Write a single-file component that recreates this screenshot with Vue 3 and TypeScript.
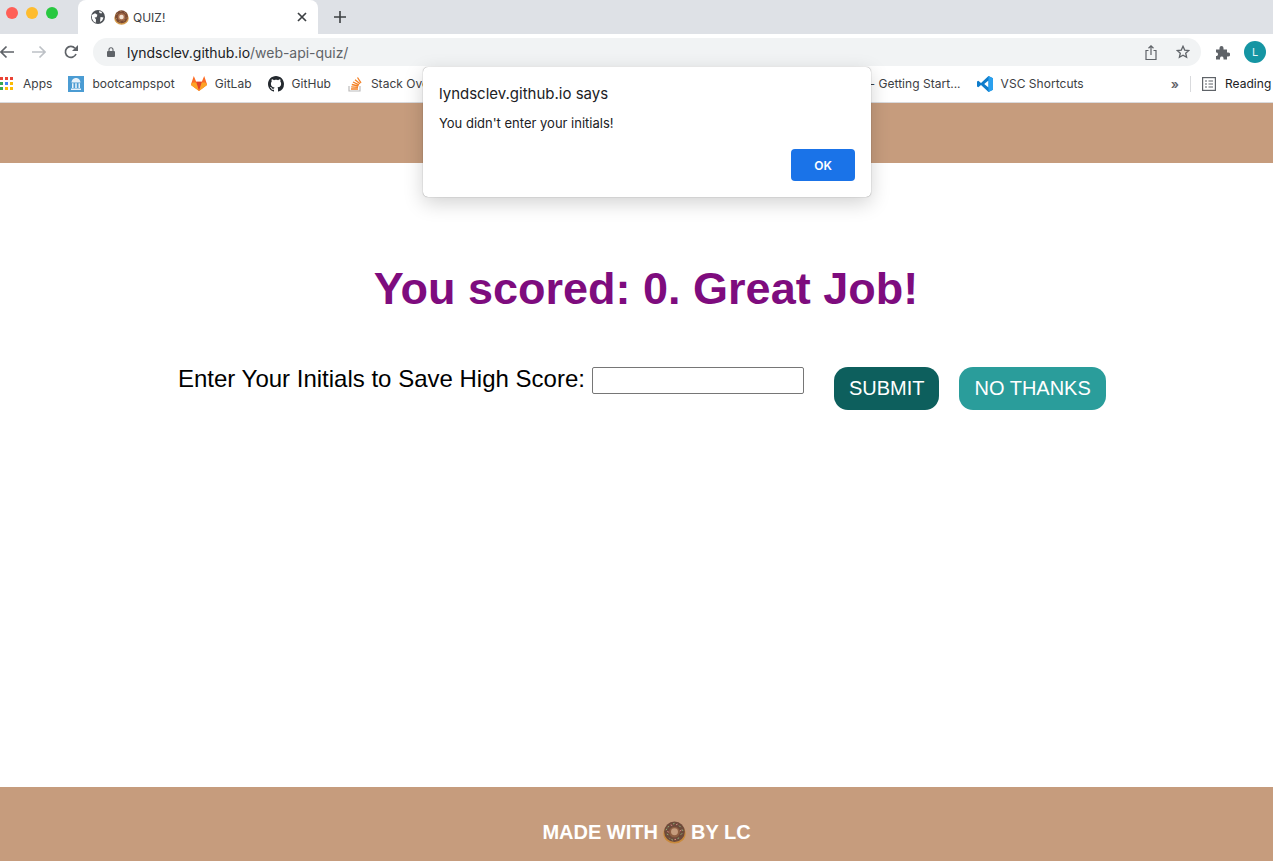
<template>
  <div class="window">
    <div class="tab-strip">
      <div class="lights">
        <span class="light red"></span>
        <span class="light amber"></span>
        <span class="light green"></span>
      </div>
      <div class="tab">
        <svg class="globe" width="14" height="14" viewBox="0 0 14 14">
          <circle cx="7" cy="7" r="7" fill="#4d5156" />
          <path d="M.8 5 4 3.200 6.400 4.800 5.600 7.200 3.600 7.400 5 9.400 4.800 12.800 2.600 11.500 1 8.500ZM8 1 11 2 10.500 3.500 8.500 3ZM9.500 7 12.500 7.500 11.200 10.500 9 12Z" fill="#fff" />
        </svg>
        <svg class="donut" width="15" height="15" viewBox="0 0 30 30">
          <ellipse cx="15" cy="16" rx="14.500" ry="13.500" fill="#d39a4c" />
          <circle cx="15" cy="13.500" r="13" fill="#7b4a33" />
          <circle cx="15" cy="14" r="7.500" fill="#a9714f" />
          <circle cx="15" cy="14" r="4.500" fill="#f3e3d3" />
          <path d="M5 9 7 7.500M21 5 23 7M4 17 6 18M24 17 26 15M13 3 15 2.500M11 23 13 24M19 22 21 21" stroke="#c9b27a" stroke-width="1.400" />
        </svg>
        <span class="tab-title">QUIZ!</span>
        <svg class="tab-close" width="10" height="10" viewBox="0 0 10 10">
          <path d="M1 1 9 9M9 1 1 9" stroke="#3c4043" stroke-width="1.700" />
        </svg>
      </div>
      <svg class="new-tab" width="12" height="12" viewBox="0 0 12 12">
        <path d="M6 0V12M0 6H12" stroke="#3c4043" stroke-width="1.600" />
      </svg>
    </div>

    <div class="toolbar">
      <svg class="nav-icon back" width="14" height="14" viewBox="2 0 14 14">
        <path d="M16 7H3M8.500 1.500 3 7l5.500 5.500" fill="none" stroke="#5f6368" stroke-width="1.700" />
      </svg>
      <svg class="nav-icon forward" width="14" height="14" viewBox="0 0 14 14">
        <path d="M0 7H13M7.500 1.500 13 7l-5.500 5.500" fill="none" stroke="#bdc1c6" stroke-width="1.700" />
      </svg>
      <svg class="nav-icon reload" width="14" height="14" viewBox="0 0 14 14">
        <path d="M12 9A5.500 5.500 0 1 1 11 3.200" fill="none" stroke="#5f6368" stroke-width="1.700" />
        <path d="M14 0V6H8Z" fill="#5f6368" />
      </svg>
      <div class="omnibox">
        <svg class="lock" width="8" height="10" viewBox="0 0 8 10">
          <path d="M2 4V2.800a2 2 0 0 1 4 0V4" fill="none" stroke="#5f6368" stroke-width="1.100" />
          <rect y="4" width="8" height="6" rx="1" fill="#5f6368" />
        </svg>
        <span class="url"><span class="url-host">lyndsclev.github.io</span>/web-api-quiz/</span>
        <svg class="share" width="12" height="15" viewBox="0 0 12 15">
          <path d="M3.500 5.500H1v9h10v-9H8.500" fill="none" stroke="#5f6368" stroke-width="1.200" />
          <path d="M6 10V1M3.500 3.200 6 .8l2.500 2.400" fill="none" stroke="#5f6368" stroke-width="1.200" />
        </svg>
        <svg class="star" width="14" height="14" viewBox="0 0 14 14">
          <path d="M7 1.300 8.700 5.100 12.800 5.500 9.700 8.200 10.600 12.300 7 10.200 3.400 12.300 4.300 8.200 1.200 5.500 5.300 5.100Z" fill="none" stroke="#5f6368" stroke-width="1.300" />
        </svg>
      </div>
      <svg class="puzzle" width="15" height="15" viewBox="0 0 15 15">
        <path d="M1 4.500H4.500V3a2 2 0 0 1 4 0V4.500H12V7.500h1.200a2 2 0 0 1 0 4H12V14.500H8.500V13a1.800 1.800 0 0 0-3.500 0v1.500H1V11h1a2 2 0 0 0 0-3.500H1Z" fill="#5f6368" />
      </svg>
      <span class="avatar">L</span>
    </div>

    <div class="bookmarks">
      <span class="apps-grid">
        <i v-for="(c, i) in appColors" :key="i" :style="{ background: c }"></i>
      </span>
      <span class="mark-label apps-label">Apps</span>
      <span class="mark">
        <svg width="16" height="16" viewBox="0 0 16 16">
          <rect width="16" height="16" fill="#4b9cd3" />
          <path d="M3.500 6.500C4 3 6 2 8 2s4 1 4.500 4.500ZM4 7.200H5.500V12H4ZM7.200 7.200H8.800V12H7.200ZM10.500 7.200H12V12H10.500ZM3 12.500H13V14H3Z" fill="#e8f2fa" />
        </svg>
        <span class="mark-label">bootcampspot</span>
      </span>
      <span class="mark">
        <svg width="16" height="15" viewBox="0 0 16 15">
          <path d="M8 15 .3 9.200 0 8.200 2.800 0 5.200 5.800H10.800L13.200 0 16 8.200 15.700 9.200Z" fill="#fc6d26" />
          <path d="M8 15 5.200 5.800H10.800Z" fill="#e24329" />
          <path d="M8 15 .3 9.200 0 8.200 2 6.500H5.200ZM8 15 15.700 9.200 16 8.200 14 6.500H10.800Z" fill="#fca326" />
        </svg>
        <span class="mark-label">GitLab</span>
      </span>
      <span class="mark">
        <svg width="16" height="16" viewBox="0 0 16 16">
          <path fill="#24292f" d="M8 0C3.580 0 0 3.580 0 8c0 3.540 2.290 6.530 5.470 7.590.4.070.55-.17.55-.38 0-.19-.01-.82-.01-1.490-2.010.37-2.530-.49-2.690-.94-.09-.23-.48-.94-.82-1.130-.28-.15-.68-.52-.01-.53.630-.01 1.080.58 1.230.82.720 1.210 1.870.87 2.330.66.070-.52.280-.87.510-1.070-1.780-.2-3.640-.89-3.640-3.950 0-.87.310-1.590.82-2.150-.08-.2-.36-1.020.08-2.120 0 0 .67-.21 2.200.82.640-.18 1.320-.27 2-.27s1.360.09 2 .27c1.530-1.040 2.200-.82 2.200-.82.440 1.100.16 1.920.08 2.120.51.560.82 1.270.82 2.150 0 3.070-1.870 3.750-3.650 3.950.29.250.54.730.54 1.480 0 1.070-.01 1.930-.01 2.200 0 .21.150.46.550.38A8.010 8.010 0 0 0 16 8c0-4.420-3.580-8-8-8Z" />
        </svg>
        <span class="mark-label">GitHub</span>
      </span>
      <span class="mark stack">
        <svg width="14" height="16" viewBox="0 0 14 16">
          <path d="M1 10V15H12V10" fill="none" stroke="#bcbbbb" stroke-width="1.200" />
          <path d="M3 13H10M3.200 10.800 10 11.400M3.800 8.500 10.400 10M5 6 11 8.800M7 3.700 12 7.800M9.500 1.500 13 6.800" fill="none" stroke="#f48024" stroke-width="1.300" />
        </svg>
        <span class="mark-label">Stack Overflow</span>
      </span>
      <span class="mark-spacer"></span>
      <span class="mark">
        <span class="mark-label">MDN - Getting Start...</span>
      </span>
      <span class="mark">
        <svg width="16" height="16" viewBox="0 0 16 16">
          <path d="M11.500 0 16 2.200V13.800L11.500 16 4 9 1.300 11.200 0 10.500V5.500L1.300 4.800 4 7ZM11.500 4.500 7.200 8 11.500 11.500Z" fill="#0e7ccb" />
          <path d="M11.500 0 16 2.200V13.800L11.500 16Z" fill="#2aa0ee" />
        </svg>
        <span class="mark-label">VSC Shortcuts</span>
      </span>
      <span class="more">»</span>
      <span class="mark-divider"></span>
      <svg class="reading-icon" width="14" height="14" viewBox="0 0 14 14">
        <rect x=".6" y=".6" width="12.800" height="12.800" fill="none" stroke="#5f6368" stroke-width="1.200" />
        <path d="M3 4H5M6.500 4H11M3 7H5M6.500 7H11M3 10H5M6.500 10H11" stroke="#5f6368" stroke-width="1.200" />
      </svg>
      <span class="reading-label">Reading</span>
    </div>

    <header class="page-header"></header>

    <main class="page-main">
      <h1 class="score">You scored: {{ score }}. Great Job!</h1>
      <form class="save-form" @submit.prevent>
        <label class="initials-label" for="initials">Enter Your Initials to Save High Score:</label>
        <input id="initials" v-model="initials" class="initials-input" type="text" />
        <button class="btn submit" type="submit">SUBMIT</button>
        <button class="btn no-thanks" type="button">NO THANKS</button>
      </form>
    </main>

    <footer class="page-footer">
      <span>MADE WITH</span>
      <svg class="footer-donut" width="23" height="23" viewBox="0 0 30 30">
        <ellipse cx="15" cy="16.500" rx="14.500" ry="13" fill="#c98a3c" />
        <circle cx="15" cy="14" r="13.500" fill="#6e4a3a" />
        <circle cx="15" cy="14.500" r="7" fill="#8f5f42" />
        <circle cx="15" cy="14" r="4.500" fill="#c69c7d" />
        <path d="M6 8 8 7M21 6 23 8M5 17 7 18M23 18 25 16M13 4 15 3M11 24 13 25M19 23 21 22M4 12 5 10M25 11 26 13M8 22 9 23" stroke="#8fb07a" stroke-width="1.300" />
        <path d="M10 5 12 6M17 5 19 4M6 13 7 15M22 13 24 12M15 24 17 24" stroke="#d98a8a" stroke-width="1.300" />
      </svg>
      <span>BY LC</span>
    </footer>

    <div class="alert" role="alertdialog">
      <div class="alert-title">lyndsclev.github.io says</div>
      <div class="alert-text">You didn't enter your initials!</div>
      <div class="alert-actions">
        <button class="alert-ok" type="button">OK</button>
      </div>
    </div>
  </div>
</template>

<script setup lang="ts">
import { ref } from "vue";

const score = ref(0);
const initials = ref("");

const appColors = [
  "#ea4335", "#ea4335", "#ea4335",
  "#34a853", "#4285f4", "#fbbc04",
  "#34a853", "#fbbc04", "#fbbc04",
];
</script>

<style scoped>
.window {
  position: relative;
  display: flex;
  flex-direction: column;
  height: 861px;
  overflow: hidden;
  background: #fff;
  font-family: "Liberation Sans", Arial, sans-serif;
}

.tab-strip {
  display: flex;
  align-items: flex-start;
  height: 34px;
  background: #dee1e6;
}

.lights {
  display: flex;
  gap: 8px;
  width: 78px;
  padding: 7px 0 0 6px;
  box-sizing: border-box;
}

.light {
  width: 12px;
  height: 12px;
  border-radius: 50%;
}

.red { background: #ff5f57; }
.amber { background: #febc2e; }
.green { background: #28c840; }

.tab {
  display: flex;
  align-items: center;
  width: 240px;
  height: 34px;
  padding: 0 11px 0 13px;
  box-sizing: border-box;
  background: #fff;
  border-radius: 8px 8px 0 0;
}

.donut {
  margin-left: 9px;
}

.tab-title {
  flex: 1;
  margin-left: 4px;
  font: 12px Inter, "Liberation Sans", sans-serif;
  color: #3c4043;
}

.new-tab {
  margin: 11px 0 0 16px;
}

.toolbar {
  display: flex;
  align-items: center;
  height: 34px;
  padding-top: 2px;
  box-sizing: border-box;
  background: #fff;
}

.nav-icon { flex: none; }
.forward { margin-left: 18px; }
.reload { margin-left: 18px; }

.omnibox {
  display: flex;
  align-items: center;
  width: 1108px;
  height: 28px;
  margin-left: 15px;
  padding: 0 11px 0 14px;
  box-sizing: border-box;
  border-radius: 14px;
  background: #f1f3f4;
}

.url {
  flex: 1;
  margin-left: 12px;
  font: 14px Inter, "Liberation Sans", sans-serif;
  letter-spacing: -0.03px;
  color: #5f6368;
}

.url-host {
  color: #202124;
}

.star {
  margin-left: 19px;
}

.puzzle {
  margin-left: 14px;
}

.avatar {
  display: flex;
  align-items: center;
  justify-content: center;
  width: 22px;
  height: 22px;
  margin-left: 14px;
  border-radius: 50%;
  background: #1595a3;
  color: #e6f6f7;
  font: 11px Inter, "Liberation Sans", sans-serif;
}

.bookmarks {
  display: flex;
  align-items: center;
  height: 35px;
  padding-bottom: 3px;
  box-sizing: border-box;
  white-space: nowrap;
  background: #fff;
  border-bottom: 1px solid #d9dadd;
  font: 12px Inter, "Liberation Sans", sans-serif;
  letter-spacing: 0.03px;
  color: #3c4043;
}

.apps-grid {
  display: grid;
  grid-template-columns: repeat(3, 3px);
  gap: 2px;
  flex: none;
}

.apps-grid i {
  width: 3px;
  height: 3px;
}

.apps-label {
  margin-left: 10px;
}

.mark {
  display: flex;
  align-items: center;
  gap: 8px;
  margin-left: 16px;
}

.mark.stack {
  gap: 9px;
  margin-left: 17px;
}

.mark-spacer {
  flex: 1;
}

.more {
  margin-left: 87px;
  font-size: 13px;
  font-weight: 600;
  color: #5f6368;
}

.mark-divider {
  width: 1px;
  height: 16px;
  margin: 0 11px 0 11px;
  background: #d9dadd;
}

.reading-label {
  width: 48px;
  margin-left: 9px;
  color: #202124;
}

.page-header {
  height: 60px;
  background: #c69c7d;
}

.page-main {
  flex: 1;
}

.score {
  margin: 98px 0 0;
  padding-left: 19px;
  text-align: center;
  font-size: 45px;
  line-height: 55px;
  font-weight: 700;
  color: #7e0c7e;
}

.save-form {
  display: flex;
  align-items: flex-start;
  margin: 51px 0 0 178px;
}

.initials-label {
  font-size: 24px;
  line-height: 23px;
  color: #000;
}

.initials-input {
  width: 212px;
  height: 27px;
  margin-left: 7px;
  padding: 1px 2px;
  box-sizing: border-box;
  border: 1px solid #767676;
  border-radius: 2px;
  background: #fff;
}

.btn {
  height: 43px;
  border: none;
  border-radius: 14px;
  color: #fff;
  font-family: inherit;
  font-size: 20px;
  padding: 0 15px;
}

.submit {
  margin-left: 30px;
  background: #0d5f5d;
}

.no-thanks {
  margin-left: 20px;
  background: #2a9d9b;
}

.page-footer {
  display: flex;
  align-items: center;
  justify-content: center;
  gap: 5px;
  height: 74px;
  padding: 16px 0 0 20px;
  box-sizing: border-box;
  background: #c69c7d;
  color: #fff;
  font-size: 20px;
  font-weight: 700;
}

.alert {
  position: absolute;
  top: 67px;
  left: 423px;
  width: 448px;
  height: 130px;
  padding: 17px 16px 16px;
  box-sizing: border-box;
  border-radius: 5px;
  background: #fff;
  box-shadow: 0 0 1px rgba(0, 0, 0, 0.55), 0 6px 20px rgba(0, 0, 0, 0.18);
  font-family: Inter, "Liberation Sans", sans-serif;
  color: #202124;
}

.alert-title {
  font-size: 15px;
  line-height: 20px;
}

.alert-text {
  margin-top: 9px;
  font-size: 13px;
  line-height: 20px;
}

.alert-actions {
  display: flex;
  justify-content: flex-end;
  margin-top: 16px;
}

.alert-ok {
  width: 64px;
  height: 32px;
  border: none;
  border-radius: 4px;
  background: #1a73e8;
  color: #fff;
  font: 600 12px Inter, "Liberation Sans", sans-serif;
}
</style>

<style>
html,
body {
  margin: 0;
  overflow: hidden;
}
</style>
